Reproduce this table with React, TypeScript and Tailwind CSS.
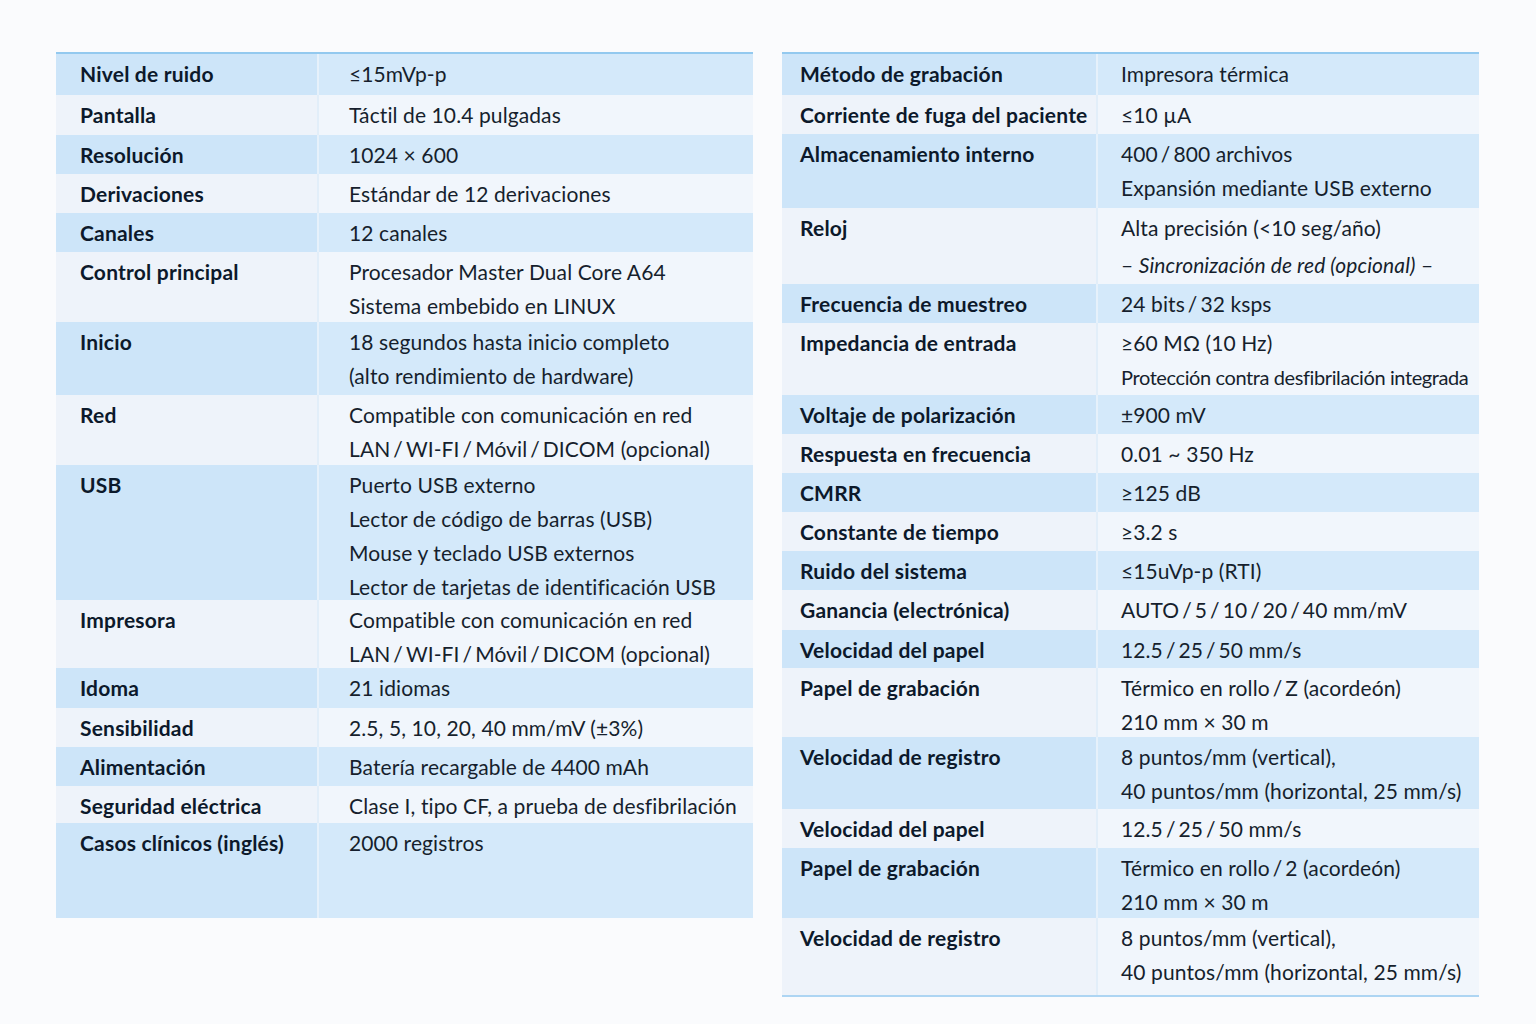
import type { ReactNode } from "react";

type Row = {
  label: string;
  values: ReactNode[];
  h: string;
};

// tighten the " / " separators, the reference sets them narrower than Lato does
function fmt(v: ReactNode): ReactNode {
  if (typeof v !== "string" || !v.includes(" / ")) return v;
  const parts = v.split(" / ");
  return parts.map((p, i) => (
    <span key={i}>
      {p}
      {i < parts.length - 1 && <span className="[word-spacing:-2.5px]"> / </span>}
    </span>
  ));
}

const leftRows: Row[] = [
  { label: "Nivel de ruido", values: ["≤15mVp-p"], h: "h-[41px]" },
  { label: "Pantalla", values: ["Táctil de 10.4 pulgadas"], h: "h-[40px]" },
  { label: "Resolución", values: ["1024 × 600"], h: "h-[39px]" },
  { label: "Derivaciones", values: ["Estándar de 12 derivaciones"], h: "h-[39px]" },
  { label: "Canales", values: ["12 canales"], h: "h-[39px]" },
  {
    label: "Control principal",
    values: ["Procesador Master Dual Core A64", "Sistema embebido en LINUX"],
    h: "h-[70px]",
  },
  {
    label: "Inicio",
    values: ["18 segundos hasta inicio completo", "(alto rendimiento de hardware)"],
    h: "h-[73px]",
  },
  {
    label: "Red",
    values: ["Compatible con comunicación en red", "LAN / WI-FI / Móvil / DICOM (opcional)"],
    h: "h-[70px]",
  },
  {
    label: "USB",
    values: [
      "Puerto USB externo",
      "Lector de código de barras (USB)",
      "Mouse y teclado USB externos",
      "Lector de tarjetas de identificación USB",
    ],
    h: "h-[135px]",
  },
  {
    label: "Impresora",
    values: ["Compatible con comunicación en red", "LAN / WI-FI / Móvil / DICOM (opcional)"],
    h: "h-[68px]",
  },
  { label: "Idoma", values: ["21 idiomas"], h: "h-[40px]" },
  { label: "Sensibilidad", values: ["2.5, 5, 10, 20, 40 mm/mV (±3%)"], h: "h-[39px]" },
  { label: "Alimentación", values: ["Batería recargable de 4400 mAh"], h: "h-[39px]" },
  {
    label: "Seguridad eléctrica",
    values: ["Clase I, tipo CF, a prueba de desfibrilación"],
    h: "h-[37px]",
  },
  { label: "Casos clínicos (inglés)", values: ["2000 registros"], h: "h-[95px]" },
];

const rightRows: Row[] = [
  { label: "Método de grabación", values: ["Impresora térmica"], h: "h-[41px]" },
  { label: "Corriente de fuga del paciente", values: ["≤10 µA"], h: "h-[39px]" },
  {
    label: "Almacenamiento interno",
    values: ["400 / 800 archivos", "Expansión mediante USB externo"],
    h: "h-[74px]",
  },
  {
    label: "Reloj",
    values: [
      "Alta precisión (<10 seg/año)",
      <span className="mt-[3px] block">
        – <span className="italic">Sincronización de red (opcional)</span> –
      </span>,
    ],
    h: "h-[76px]",
  },
  { label: "Frecuencia de muestreo", values: ["24 bits / 32 ksps"], h: "h-[39px]" },
  {
    label: "Impedancia de entrada",
    values: [
      "≥60 MΩ (10 Hz)",
      <span className="block text-[20px] tracking-[-0.4px]">
        Protección contra desfibrilación integrada
      </span>,
    ],
    h: "h-[72px]",
  },
  { label: "Voltaje de polarización", values: ["±900 mV"], h: "h-[39px]" },
  { label: "Respuesta en frecuencia", values: ["0.01 ~ 350 Hz"], h: "h-[39px]" },
  { label: "CMRR", values: ["≥125 dB"], h: "h-[39px]" },
  { label: "Constante de tiempo", values: ["≥3.2 s"], h: "h-[39px]" },
  { label: "Ruido del sistema", values: ["≤15uVp-p (RTI)"], h: "h-[39px]" },
  { label: "Ganancia (electrónica)", values: ["AUTO / 5 / 10 / 20 / 40 mm/mV"], h: "h-[40px]" },
  { label: "Velocidad del papel", values: ["12.5 / 25 / 50 mm/s"], h: "h-[38px]" },
  {
    label: "Papel de grabación",
    values: ["Térmico en rollo / Z (acordeón)", "210 mm × 30 m"],
    h: "h-[69px]",
  },
  {
    label: "Velocidad de registro",
    values: ["8 puntos/mm (vertical),", "40 puntos/mm (horizontal, 25 mm/s)"],
    h: "h-[72px]",
  },
  { label: "Velocidad del papel", values: ["12.5 / 25 / 50 mm/s"], h: "h-[39px]" },
  {
    label: "Papel de grabación",
    values: ["Térmico en rollo / 2 (acordeón)", "210 mm × 30 m"],
    h: "h-[70px]",
  },
  {
    label: "Velocidad de registro",
    values: ["8 puntos/mm (vertical),", "40 puntos/mm (horizontal, 25 mm/s)"],
    h: "h-[77px]",
  },
];

function SpecTable({
  rows,
  labelCol,
  labelPad,
  valuePad,
  bottomLine,
}: {
  rows: Row[];
  labelCol: string;
  labelPad: string;
  valuePad: string;
  bottomLine?: boolean;
}) {
  return (
    <div
      className={`w-[697px] border-t-2 border-[#93c9ef] ${
        bottomLine ? "border-b-2 border-b-[#add5f3]" : ""
      }`}
    >
      {rows.map((row, i) => {
        const blue = i % 2 === 0;
        return (
          <div key={i} className={`flex ${row.h}`}>
            <div
              className={`${labelCol} shrink-0 ${labelPad} pt-[4px] text-[21px] leading-[32px] font-bold tracking-[0.2px] whitespace-nowrap text-[#0c192b] ${
                blue ? "bg-[#cde5f9]" : "bg-[#eef3fa]"
              }`}
            >
              {row.label}
            </div>
            <div className={`w-[2px] shrink-0 ${blue ? "bg-[#e6f1fb]" : "bg-[#e2eef9]"}`} />
            <div
              className={`flex-1 ${valuePad} pt-[3px] text-[21px] leading-[34px] tracking-[0.1px] whitespace-nowrap text-[#161f2d] ${
                blue ? "bg-[#d4e9fa]" : "bg-[#f1f6fc]"
              }`}
            >
              {row.values.map((v, j) => (
                <div key={j}>{fmt(v)}</div>
              ))}
            </div>
          </div>
        );
      })}
    </div>
  );
}

export default function App() {
  return (
    <div className="min-h-[1024px] w-[1536px] bg-[#fafbfd] pl-[56px] pt-[52px] font-['Lato','Noto_Sans',sans-serif]">
      <div className="flex items-start gap-[29px]">
        <SpecTable rows={leftRows} labelCol="w-[261px]" labelPad="pl-[24px]" valuePad="pl-[30px]" />
        <SpecTable
          rows={rightRows}
          labelCol="w-[314px]"
          labelPad="pl-[18px]"
          valuePad="pl-[23px]"
          bottomLine
        />
      </div>
    </div>
  );
}
